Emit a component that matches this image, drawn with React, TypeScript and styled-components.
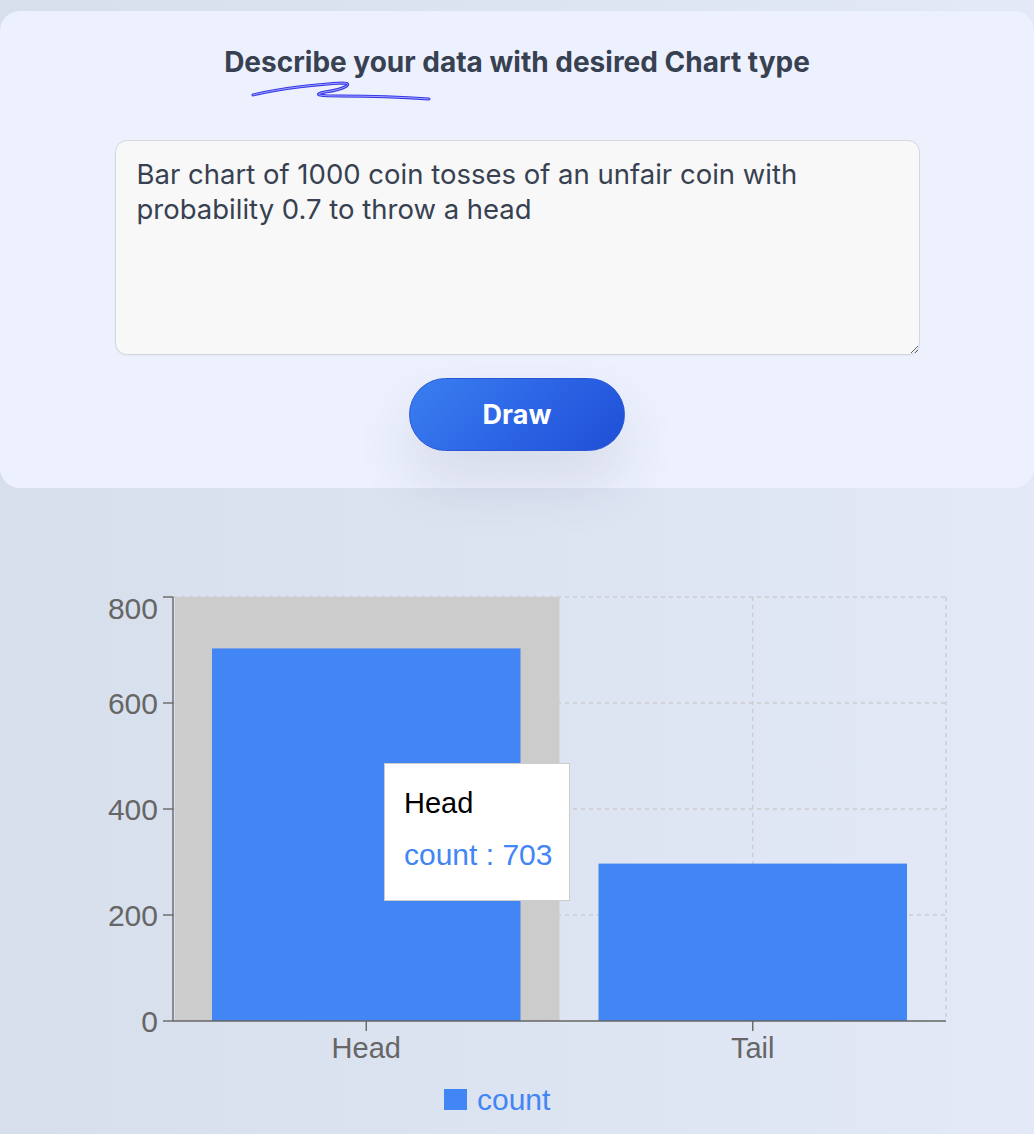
import React from 'react'
import styled, {createGlobalStyle} from 'styled-components'

const GlobalStyle = createGlobalStyle`
  html, body {
    margin: 0;
    padding: 0;
  }
  body {
    min-height: 1134px;
    background: linear-gradient(90deg, #d7dfec 0%, #dde4f1 50%, #e3e9f7 100%);
    font-family: Inter, 'Noto Sans', sans-serif;
    overflow: hidden;
  }
`

const data = [
  {name: 'Head', count: 703},
  {name: 'Tail', count: 297},
]

// chart geometry in page coordinates (svg viewBox starts at y=560)
const plot = {left: 173, right: 946, top: 597, bottom: 1021, max: 800}
const bandWidth = (plot.right - plot.left) / data.length
const yFor = (v: number) => plot.bottom - (v / plot.max) * (plot.bottom - plot.top)
const yTicks = [0, 200, 400, 600, 800]

export default function App() {
  return (
    <>
      <GlobalStyle />
      <Page>
        <Panel>
          <TitleBlock>
            <Title>Describe your data with desired Chart type</Title>
            <Squiggle width='200' height='22' viewBox='0 0 200 22'>
              <path
                d='M2 15 C 30 8, 70 4, 92 3 C 102 3, 96 9, 74 12 C 60 15, 70 16, 90 16 C 120 16, 150 17, 178 19'
                fill='none'
                stroke='#3535e8'
                strokeWidth='3'
                strokeLinecap='round'
              />
              <path
                d='M2 15 C 30 8, 70 4, 92 3 C 102 3, 96 9, 74 12 C 60 15, 70 16, 90 16 C 120 16, 150 17, 178 19'
                fill='none'
                stroke='#9fa6fb'
                strokeWidth='1'
                strokeLinecap='round'
              />
            </Squiggle>
          </TitleBlock>
          <Prompt defaultValue='Bar chart of 1000 coin tosses of an unfair coin with probability 0.7 to throw a head' />
          <DrawButton>Draw</DrawButton>
        </Panel>

        <ChartArea>
          <svg width='1034' height='574' viewBox='0 560 1034 574'>
            {yTicks.slice(1).map(t => (
              <line key={t} x1={plot.left} x2={plot.right} y1={yFor(t)} y2={yFor(t)} stroke='#ccc' strokeDasharray='4 4' strokeWidth='1.4' />
            ))}
            {data.map((d, i) => {
              const cx = plot.left + bandWidth * (i + 0.5)
              return <line key={d.name} x1={cx} x2={cx} y1={plot.top} y2={plot.bottom} stroke='#ccc' strokeDasharray='4 4' strokeWidth='1.4' />
            })}
            <line x1={plot.right} x2={plot.right} y1={plot.top} y2={plot.bottom} stroke='#ccc' strokeDasharray='4 4' strokeWidth='1.4' />

            <rect x={plot.left + 2} y={plot.top} width={bandWidth - 2} height={plot.bottom - plot.top} fill='#ccc' />

            {data.map((d, i) => {
              const x0 = plot.left + bandWidth * i + 39
              return <rect key={d.name} x={x0} y={yFor(d.count)} width={bandWidth - 78} height={plot.bottom - yFor(d.count)} fill='#4285f4' />
            })}

            <line x1={plot.left} x2={plot.left} y1={plot.top} y2={plot.bottom} stroke='#666' strokeWidth='1.4' />
            {yTicks.map(t => (
              <g key={t}>
                <line x1={plot.left - 10} x2={plot.left} y1={yFor(t)} y2={yFor(t)} stroke='#666' strokeWidth='1.4' />
                <AxisText x={plot.left - 15} y={yFor(t) + (t === plot.max ? 11 : 0)} textAnchor='end' dominantBaseline='central' $size={30}>
                  {t}
                </AxisText>
              </g>
            ))}

            <line x1={plot.left} x2={plot.right} y1={plot.bottom} y2={plot.bottom} stroke='#666' strokeWidth='1.4' />
            {data.map((d, i) => {
              const cx = plot.left + bandWidth * (i + 0.5)
              return (
                <g key={d.name}>
                  <line x1={cx} x2={cx} y1={plot.bottom} y2={plot.bottom + 10} stroke='#666' strokeWidth='1.4' />
                  <AxisText x={cx} y={plot.bottom + 27} textAnchor='middle' dominantBaseline='central' $size={29}>
                    {d.name}
                  </AxisText>
                </g>
              )
            })}

            <rect x='444' y='1089' width='23' height='21' fill='#4285f4' />
            <LegendText x='477' y='1099' dominantBaseline='central'>
              count
            </LegendText>
          </svg>

          <Tooltip>
            <TooltipLabel>Head</TooltipLabel>
            <TooltipItem>count : 703</TooltipItem>
          </Tooltip>
        </ChartArea>
      </Page>
    </>
  )
}

const Page = styled.div`
  padding-top: 11px;
  display: flex;
  flex-direction: column;
`

const Panel = styled.section`
  background: #edf1fd;
  border-radius: 20px;
  padding: 35px 0 37px;
  display: flex;
  flex-direction: column;
  align-items: center;
`

const TitleBlock = styled.div`
  display: flex;
  flex-direction: column;
  align-items: flex-start;
`

const Title = styled.h1`
  margin: 0;
  font-family: Inter, 'Noto Sans', sans-serif;
  font-size: 28px;
  line-height: 32px;
  font-weight: 700;
  color: #374151;
`

const Squiggle = styled.svg`
  display: block;
  margin: 2px 0 0 27px;
`

const Prompt = styled.textarea`
  box-sizing: border-box;
  width: 805px;
  height: 215px;
  margin-top: 38px;
  padding: 16px 21px;
  border: 1px solid #d4d7de;
  border-radius: 12px;
  background: #f8f8f8;
  font-family: Inter, 'Noto Sans', sans-serif;
  font-size: 27.5px;
  line-height: 35px;
  color: #374151;
  box-shadow: 0 1px 2px rgba(0, 0, 0, 0.04);
  &:focus {
    outline: none;
  }
`

const DrawButton = styled.button`
  margin-top: 23px;
  width: 216px;
  height: 73px;
  border-radius: 999px;
  border: 1px solid #2a56d6;
  background: linear-gradient(135deg, #3a7ff0 0%, #2b63e4 55%, #1f4fd6 100%);
  color: #fff;
  font-family: Inter, 'Noto Sans', sans-serif;
  font-size: 27px;
  font-weight: 700;
  cursor: pointer;
  box-shadow: 0 30px 60px rgba(40, 50, 90, 0.12);
`

const ChartArea = styled.div`
  position: relative;
  margin-top: 72px;
  height: 574px;

  svg {
    display: block;
  }
`

const AxisText = styled.text<{$size: number}>`
  font-family: 'Liberation Sans', Arial, sans-serif;
  font-size: ${p => p.$size}px;
  fill: #666;
`

const LegendText = styled.text`
  font-family: 'Liberation Sans', Arial, sans-serif;
  font-size: 30px;
  fill: #4285f4;
`

const Tooltip = styled.div`
  position: absolute;
  left: 384px;
  top: 203px;
  box-sizing: border-box;
  width: 186px;
  height: 138px;
  padding: 23px 19px 0;
  background: #fff;
  border: 1px solid #ccc;
  font-family: 'Liberation Sans', Arial, sans-serif;
  line-height: 33px;
  white-space: nowrap;
`

const TooltipLabel = styled.p`
  margin: 0;
  font-size: 29px;
  color: #000;
`

const TooltipItem = styled.p`
  margin: 18px 0 0;
  font-size: 30px;
  color: #4285f4;
`
